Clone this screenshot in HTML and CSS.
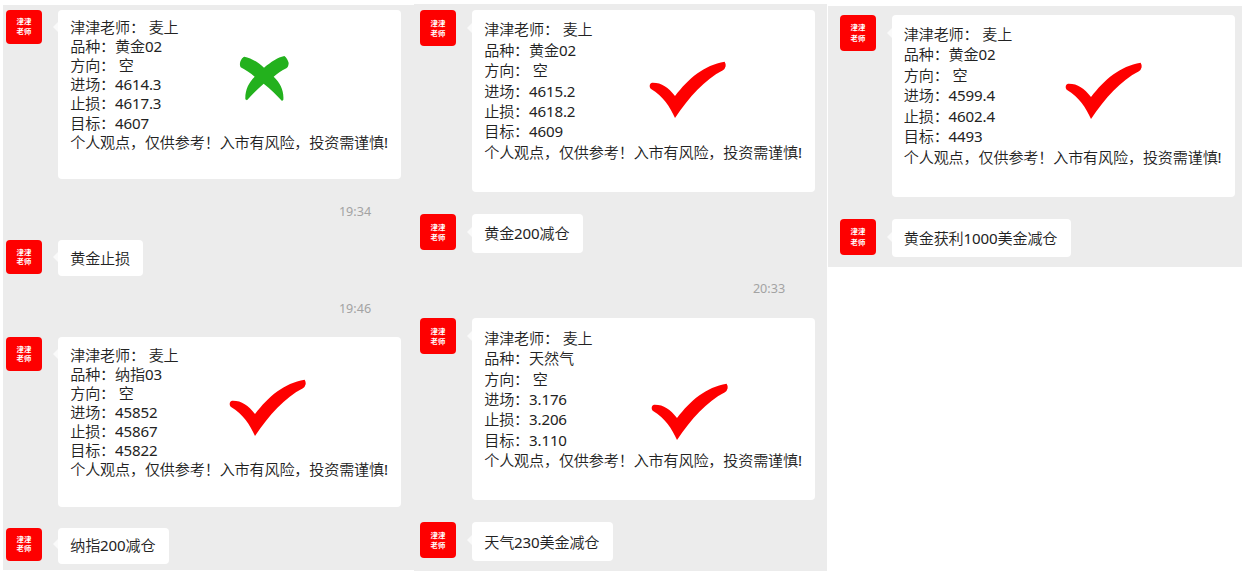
FILE: index.html
```
<!DOCTYPE html>
<html lang="zh-CN">
<head>
<meta charset="utf-8">
<title>津津老师</title>
<link rel="stylesheet" href="styles.css">
</head>
<body>
<svg class="defs" width="0" height="0" aria-hidden="true">
  <symbol id="check" viewBox="0 0 234 178"><path d="M5 82C5 76 7 73 12 71C40 70 60 84 81 111C122 58 168 18 230 8Q234 14 233 22Q231 30 225 34C170 62 124 114 81 177C65 142 47 113 8 89Q5 86 5 82Z" fill="#fe0000"/></symbol>
  <symbol id="cross" viewBox="116 166 152 140"><path d="M119 191C120 182 126 173 132 171C152 174 172 188 191 204C212 187 232 173 252 169C258 173 263 182 265 190Q264 203 258 206C244 212 232 221 220 231C240 250 251 272 249 300L245 304C228 285 210 268 190 252C172 268 155 284 140 302L135 299C134 272 144 250 163 231C150 220 138 212 121 203Q118 198 119 191Z" fill="#23b11d"/></symbol>
</svg>
<main class="board">
  <section class="chat chat-compact">
    <div class="message">
      <div class="avatar">津津<br>老师</div>
      <div class="bubble signal">津津老师： 麦上<br>品种：黄金02<br>方向： 空<br>进场：4614.3<br>止损：4617.3<br>目标：4607<br>个人观点，仅供参考！入市有风险，投资需谨慎!<svg class="mark cross"><use href="#cross"/></svg></div>
    </div>
    <div class="time">19:34</div>
    <div class="message">
      <div class="avatar">津津<br>老师</div>
      <div class="bubble">黄金止损</div>
    </div>
    <div class="time">19:46</div>
    <div class="message">
      <div class="avatar">津津<br>老师</div>
      <div class="bubble signal">津津老师： 麦上<br>品种：纳指03<br>方向： 空<br>进场：45852<br>止损：45867<br>目标：45822<br>个人观点，仅供参考！入市有风险，投资需谨慎!<svg class="mark check-nasdaq"><use href="#check"/></svg></div>
    </div>
    <div class="message follow">
      <div class="avatar">津津<br>老师</div>
      <div class="bubble">纳指200减仓</div>
    </div>
  </section>
  <section class="chat chat-middle">
    <div class="message">
      <div class="avatar">津津<br>老师</div>
      <div class="bubble signal">津津老师： 麦上<br>品种：黄金02<br>方向： 空<br>进场：4615.2<br>止损：4618.2<br>目标：4609<br>个人观点，仅供参考！入市有风险，投资需谨慎!<svg class="mark check-gold"><use href="#check"/></svg></div>
    </div>
    <div class="message follow">
      <div class="avatar">津津<br>老师</div>
      <div class="bubble">黄金200减仓</div>
    </div>
    <div class="time">20:33</div>
    <div class="message">
      <div class="avatar">津津<br>老师</div>
      <div class="bubble signal">津津老师： 麦上<br>品种：天然气<br>方向： 空<br>进场：3.176<br>止损：3.206<br>目标：3.110<br>个人观点，仅供参考！入市有风险，投资需谨慎!<svg class="mark check-gas"><use href="#check"/></svg></div>
    </div>
    <div class="message follow">
      <div class="avatar">津津<br>老师</div>
      <div class="bubble">天气230美金减仓</div>
    </div>
  </section>
  <section class="chat chat-last">
    <div class="message">
      <div class="avatar">津津<br>老师</div>
      <div class="bubble signal">津津老师： 麦上<br>品种：黄金02<br>方向： 空<br>进场：4599.4<br>止损：4602.4<br>目标：4493<br>个人观点，仅供参考！入市有风险，投资需谨慎!<svg class="mark check-profit"><use href="#check"/></svg></div>
    </div>
    <div class="message follow">
      <div class="avatar">津津<br>老师</div>
      <div class="bubble">黄金获利1000美金减仓</div>
    </div>
  </section>
</main>
</body>
</html>
```
FILE: styles.css
```
* { box-sizing: border-box; }
body {
  margin: 0;
  background: #fff;
  font-family: "Noto Sans", "Noto Sans CJK SC", sans-serif;
  text-spacing-trim: space-all;
}
.defs { position: absolute; }
.board { display: flex; align-items: flex-start; height: 581px; overflow: hidden; }

.chat {
  --line: 20.45px;
  --avatar: 36px;
  --signal: 182px;
  --reply: 38.8px;
  --pad: 9.2px;
  --gap: 22px;
  flex: none;
  background: #ececec;
}
.chat-compact {
  --line: 19.05px;
  --avatar: 33.5px;
  --signal: 169.3px;
  --reply: 36px;
  --pad: 8.3px;
  --gap: 21px;
  width: 411px; height: 565px;
  margin: 5px 0 0 3px;
  padding: 5px 0 0 3px;
}
.chat-middle { width: 413px; height: 567px; margin-top: 4px; padding: 6px 0 0 6px; }
.chat-last { width: 414px; height: 261px; margin: 6px 0 0 1px; padding: 8.6px 0 0 12px; }

.message { display: flex; align-items: flex-start; gap: 16px; }
.chat-last .message { gap: 15.6px; }
.follow { margin-top: var(--gap); }

.avatar {
  flex: none;
  display: flex;
  align-items: center;
  justify-content: center;
  width: 36px;
  height: var(--avatar);
  border-radius: 4px;
  background: #fe0000;
  color: #fff;
  font-size: 7.4px;
  font-weight: 700;
  line-height: calc(var(--line) / 2);
}
.bubble {
  position: relative;
  height: var(--reply);
  padding: var(--pad) 13.3px 0 12.2px;
  border-radius: 4px;
  background: #fff;
  color: #222;
  font-family: "Noto Sans", "Noto Sans CJK SC DemiLight", "Noto Sans CJK SC", sans-serif;
  font-size: 15.1px;
  letter-spacing: -0.15px;
  line-height: var(--line);
  white-space: nowrap;
}
.follow .bubble:not(.signal) { padding-right: 14px; }
.signal { width: 343.3px; height: var(--signal); }
.bubble::before {
  content: "";
  position: absolute;
  left: -5px;
  top: calc(var(--avatar) / 2 - 5px);
  border: solid transparent;
  border-width: 5px 5px 5px 0;
  border-right-color: #fafafa;
}
.time {
  display: flex;
  align-items: center;
  justify-content: center;
  height: 61px;
  color: #a3a3a3;
  font-size: 12.6px;
}
.chat-compact .time { height: 61px; padding: 4px 0 0 290px; }
.chat-middle .time { height: 65.7px; padding: 5.4px 0 0 291px; }

.mark { position: absolute; width: 78px; height: 59.3px; }
.cross { left: 180.7px; top: 45.3px; width: 50.7px; height: 46.7px; }
.check-nasdaq { left: 170.3px; top: 39.4px; }
.check-gold { left: 176.3px; top: 48.7px; }
.check-gas { left: 178.3px; top: 62.2px; }
.check-profit { left: 172.8px; top: 45.8px; }
```
